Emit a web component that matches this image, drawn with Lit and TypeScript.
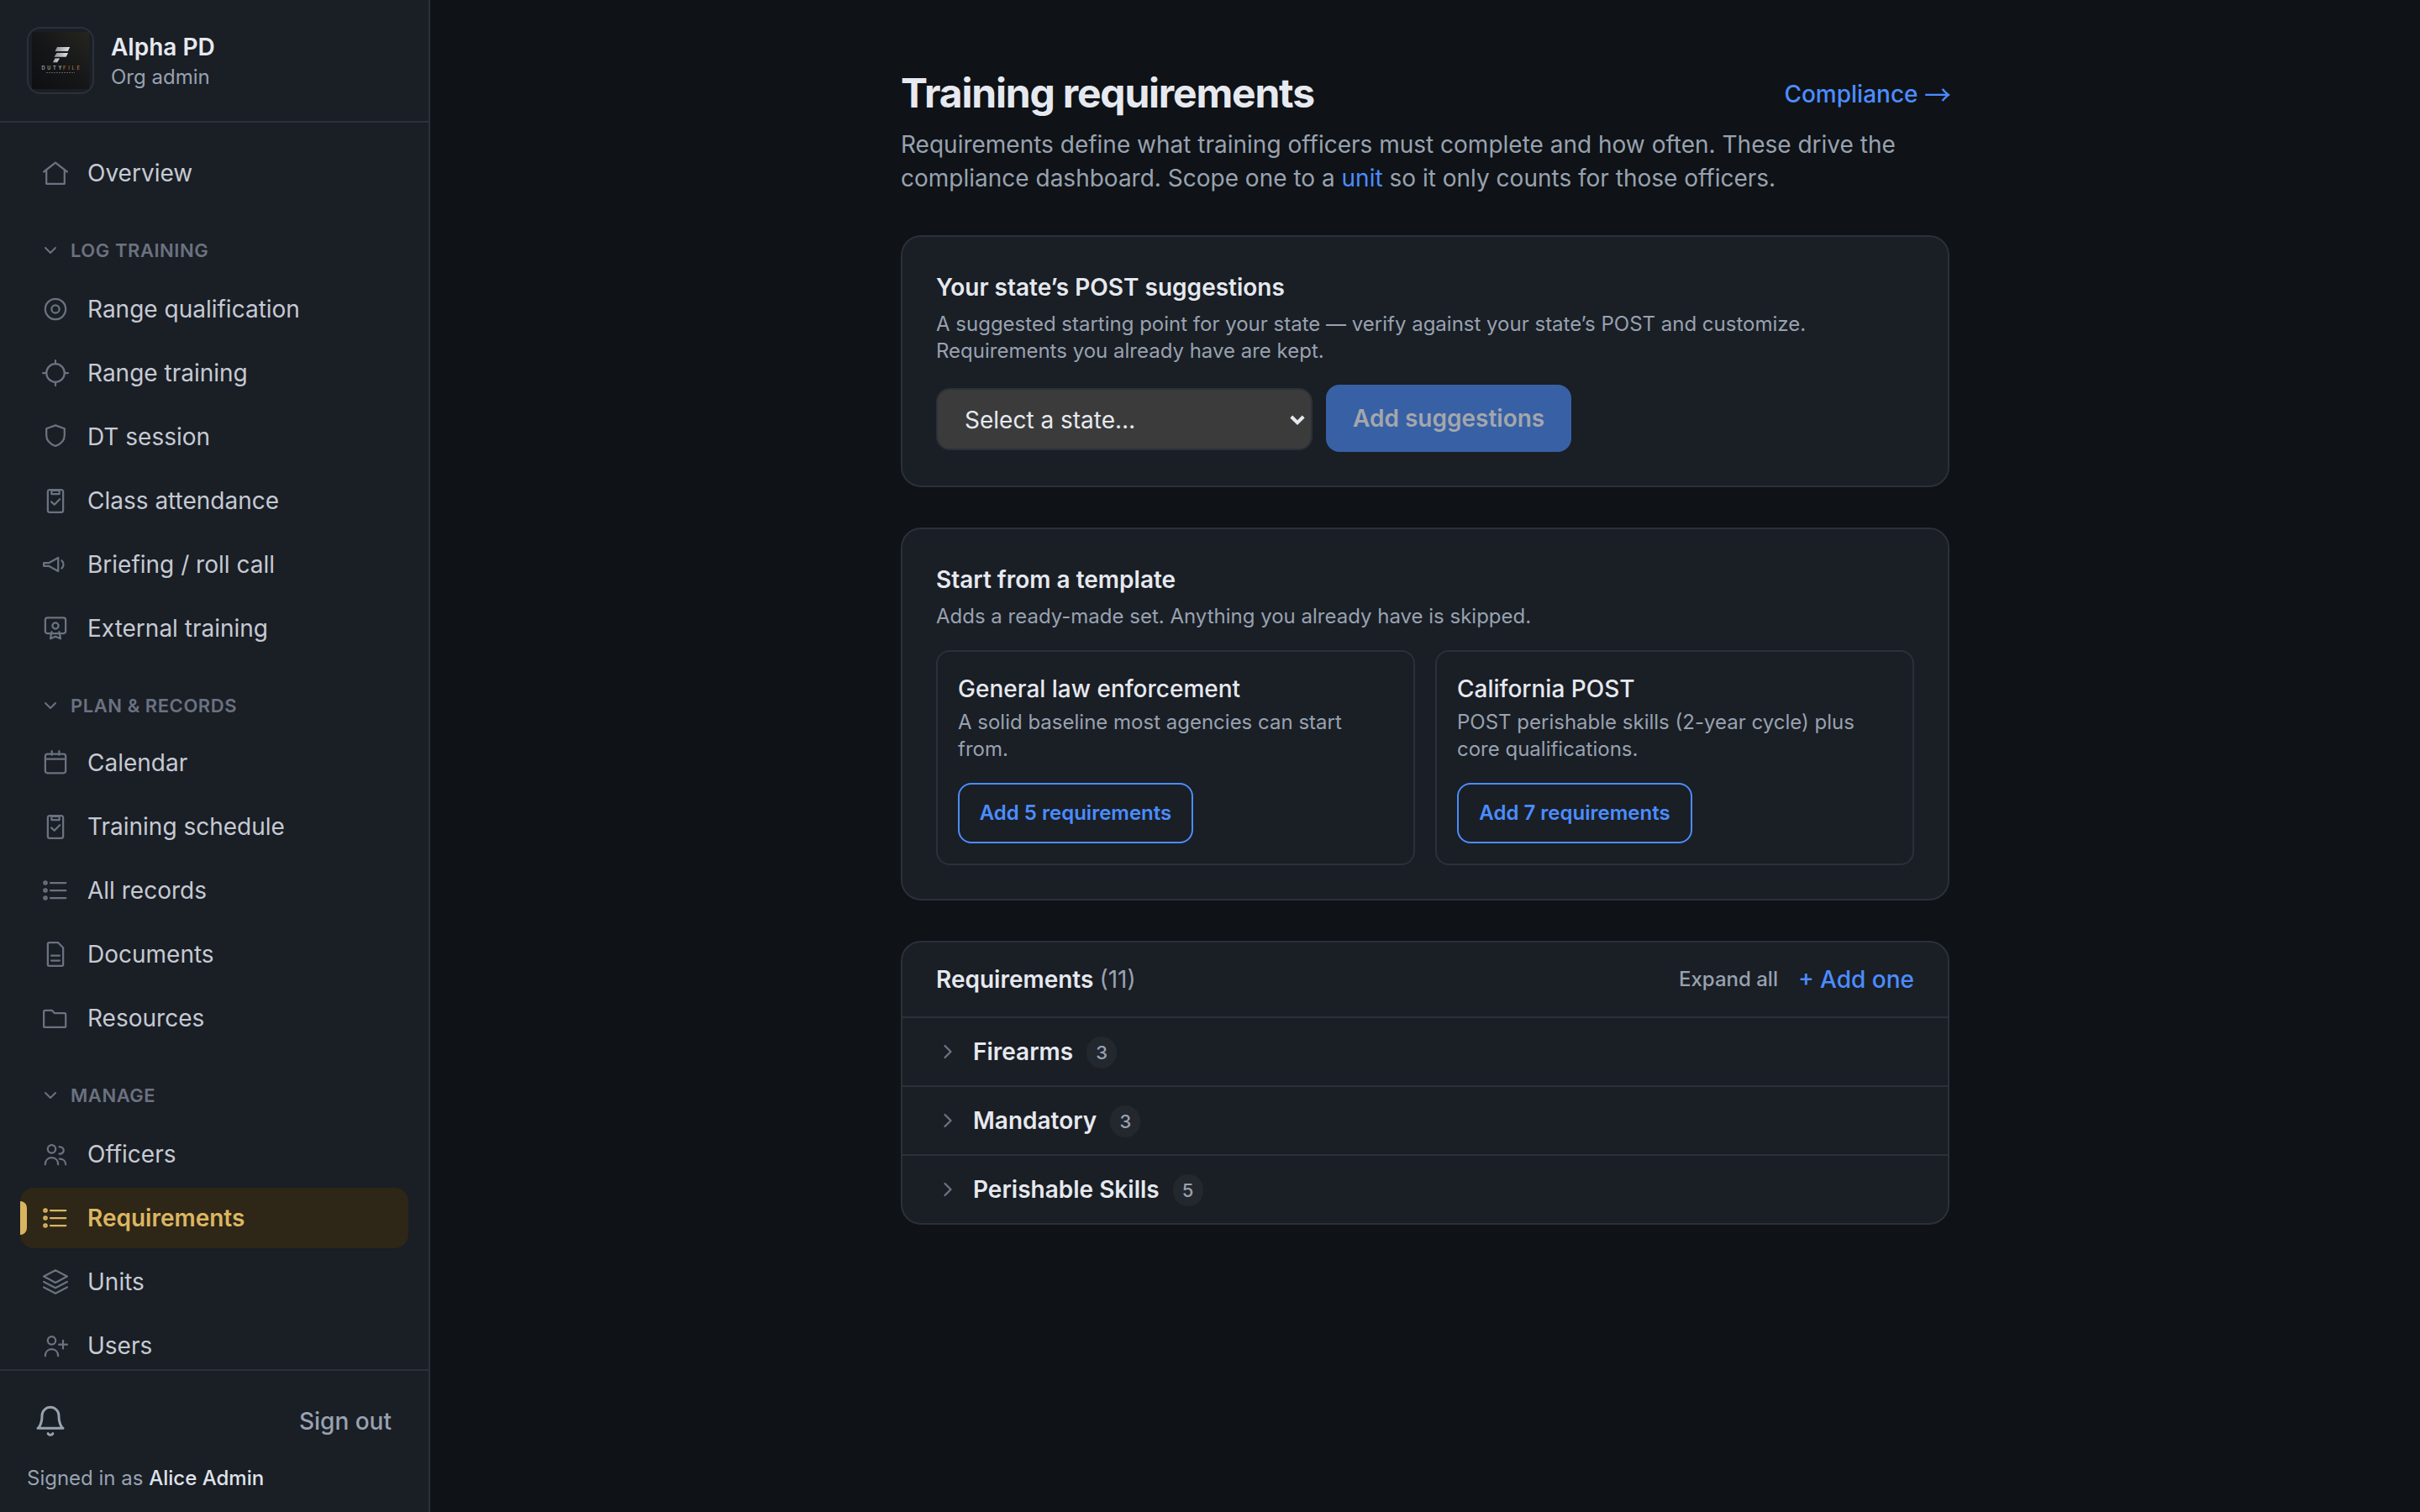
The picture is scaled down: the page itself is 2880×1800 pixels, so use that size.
import { LitElement, html, svg, css } from "lit";
import { customElement, property } from "lit/decorators.js";
import { classMap } from "lit/directives/class-map.js";

const icons: Record<string, unknown> = {
  home: svg`<path d="M2.75 11 12 3.75 21.25 11M4.8 9.6v10.9h14.4V9.6"/>`,
  target: svg`<circle cx="12" cy="12" r="8.1"/><circle cx="12" cy="12" r="3.1"/>`,
  crosshair: svg`<circle cx="12" cy="12" r="7.2"/><path d="M12 2v2.8M12 19.2V22M2 12h2.8M19.2 12H22"/>`,
  shield: svg`<path d="M12 2.9l7.2 2.6v5.4c0 4-2.9 6.9-7.2 8.4-4.3-1.5-7.2-4.4-7.2-8.4v-5.4z"/>`,
  clipboard: svg`<rect x="5.9" y="3.4" width="12.2" height="17.8" rx="1.6"/><path d="M8.9 3.9h6.2v2.9H8.9zM8.75 12.9l2.4 2.3 4.3-4.4"/>`,
  megaphone: svg`<path d="M2.75 10.8h3.9l7.5-4.2v10.8l-7.5-4.2h-3.9zM17 8.9a4.3 4.3 0 0 1 0 6.2"/>`,
  certificate: svg`<rect x="3.9" y="3.6" width="16.2" height="12.4" rx="1.8"/><circle cx="12" cy="10" r="2.4"/><path d="M9 14.8l-1 5.4 4-1.7 4 1.7-1-5.4"/>`,
  calendar: svg`<rect x="3.9" y="5" width="16.2" height="15.2" rx="1.8"/><path d="M3.9 9h16.2M9.1 2.75v3M14.9 2.75v3"/>`,
  list: svg`<circle cx="4" cy="6" r="1.1"/><circle cx="4" cy="12" r="1.1"/><circle cx="4" cy="18" r="1.1"/><path d="M8 6h12.2M8 12h12.2M8 18h12.2"/>`,
  document: svg`<path d="M5.9 3.9c0-.7.4-1.1 1.1-1.1h7.2l3.9 4v13.3c0 .7-.4 1.1-1.1 1.1H7c-.7 0-1.1-.4-1.1-1.1zM8.75 13.1h6.5M8.75 17h6.5"/>`,
  folder: svg`<path d="M2.75 6.9c0-.6.4-1 1-1h5.5l1.9 2.1h8c.6 0 1 .4 1 1v9.3c0 .6-.4 1-1 1H3.75c-.6 0-1-.4-1-1z"/>`,
  officers: svg`<circle cx="9" cy="7.9" r="3.15"/><path d="M3.9 20.2c0-3.2 2-5.4 5.1-5.4s5.1 2.2 5.1 5.4M15 6.2h.7a2.75 2.75 0 0 1 0 5.5H15M15.2 15.8c3 0 4.9 1.7 4.9 4.4"/>`,
  layers: svg`<path d="M12 2.8l9.25 4.9L12 12.6 2.75 7.7zM2.75 12 12 16.9 21.25 12M2.75 16.3 12 21.2l9.25-4.9"/>`,
  users: svg`<circle cx="9" cy="7.9" r="3.15"/><path d="M3.9 20.2c0-3.2 2-5.4 5.1-5.4s5.1 2.2 5.1 5.4M18 7.9v6.4M14.75 11.1h6.5"/>`,
  bell: svg`<path d="M6 8a6 6 0 0 1 12 0c0 7 3 9 3 9H3s3-2 3-9"/><path d="M10.3 20.8a1.94 1.94 0 0 0 3.4 0"/>`,
  down: svg`<path d="m6 9 6 6 6-6"/>`,
  right: svg`<path d="m9 18 6-6-6-6"/>`,
};

@customElement("ui-icon")
class UiIcon extends LitElement {
  @property() name = "home";
  static styles = css`
    :host { display: block; flex: none; }
    svg { display: block; width: 100%; height: 100%; fill: none; stroke: currentColor;
      stroke-width: var(--stroke, 1.5); stroke-linecap: round; stroke-linejoin: round; }
  `;
  render() {
    return html`<svg viewBox="0 0 24 24" aria-hidden="true">${icons[this.name]}</svg>`;
  }
}

interface Item { label: string; icon: string; active?: boolean }
const groups: { title?: string; items: Item[] }[] = [
  { items: [{ label: "Overview", icon: "home" }] },
  {
    title: "LOG TRAINING",
    items: [
      { label: "Range qualification", icon: "target" },
      { label: "Range training", icon: "crosshair" },
      { label: "DT session", icon: "shield" },
      { label: "Class attendance", icon: "clipboard" },
      { label: "Briefing / roll call", icon: "megaphone" },
      { label: "External training", icon: "certificate" },
    ],
  },
  {
    title: "PLAN & RECORDS",
    items: [
      { label: "Calendar", icon: "calendar" },
      { label: "Training schedule", icon: "clipboard" },
      { label: "All records", icon: "list" },
      { label: "Documents", icon: "document" },
      { label: "Resources", icon: "folder" },
    ],
  },
  {
    title: "MANAGE",
    items: [
      { label: "Officers", icon: "officers" },
      { label: "Requirements", icon: "list", active: true },
      { label: "Units", icon: "layers" },
      { label: "Users", icon: "users" },
    ],
  },
];

const base = css`
  * { box-sizing: border-box; margin: 0; }
  a { color: #4b8dff; text-decoration: none; }
  button { font: inherit; color: inherit; background: none; border: 0; padding: 0; }
`;

@customElement("side-bar")
class SideBar extends LitElement {
  static styles = [base, css`
    :host { display: flex; flex-direction: column; width: 512px; height: 1800px; flex: none;
      background: #1a1e25; border-right: 2px solid #2b303a; box-sizing: border-box; }
    .org { display: flex; align-items: flex-start; gap: 20px; padding: 32px; height: 146px; flex: none;
      border-bottom: 2px solid #2b303a; }
    .logo { width: 80px; height: 80px; border: 2px solid #2b303a; border-radius: 16px; padding: 4px; }
    .logo svg { display: block; width: 68px; height: 68px; }
    .who { padding-top: 4px; }
    .name { font-size: 28px; line-height: 40px; font-weight: 600; color: #e6e9ef; }
    .role { font-size: 24px; line-height: 32px; color: #98a2b0; }
    nav { flex: 1; min-height: 0; overflow: hidden; padding: 24px 24px 0; }
    .head { display: flex; align-items: center; gap: 12px; height: 48px; margin: 32px 0 10px; padding: 0 24px;
      color: #6b7280; font-size: 22px; font-weight: 600; letter-spacing: 0.025em; }
    .group:nth-child(3) .head { margin-bottom: 8px; }
    .head ui-icon { width: 24px; height: 24px; --stroke: 2; }
    .items { display: flex; flex-direction: column; gap: 4px; }
    .item { position: relative; display: flex; align-items: center; gap: 20px; height: 72px; padding: 0 24px;
      border-radius: 16px; font-size: 28px; line-height: 40px; color: #c5cad3; overflow: hidden; flex: none; }
    .item ui-icon { width: 36px; height: 36px; color: #6b7280; }
    .active { background: #2e2616; color: #dbb663; font-weight: 600; }
    .active ui-icon { color: #dbb663; }
    .active::before { content: ""; position: absolute; left: 0; top: 16px; width: 8px; height: 40px;
      border-radius: 0 8px 8px 0; background: #d9b45f; }
    footer { flex: none; height: 170px; border-top: 2px solid #2b303a; padding: 24px 32px; }
    .tools { display: flex; align-items: center; justify-content: space-between; height: 72px; padding: 0 12px 0 8px;
      color: #98a2b0; font-size: 28px; line-height: 40px; font-weight: 500; }
    .tools ui-icon { width: 40px; height: 40px; --stroke: 1.8; }
    .signed { margin-top: 16px; font-size: 24px; line-height: 32px; color: #98a2b0; }
    .signed b { font-weight: 500; color: #dfe3e9; }
  `];
  render() {
    return html`
      <div class="org">
        <div class="logo">
          <svg viewBox="0 0 68 68">
            <defs>
              <linearGradient id="bg" x1="0" y1="1" x2="1" y2="0">
                <stop offset="0" stop-color="#0e0f11" /><stop offset=".5" stop-color="#151618" /><stop offset="1" stop-color="#26251f" />
              </linearGradient>
              <linearGradient id="fg" x1="0" y1="0" x2="1" y2="0">
                <stop offset="0" stop-color="#8d8f93" /><stop offset="1" stop-color="#e2e3e5" />
              </linearGradient>
            </defs>
            <rect width="68" height="68" fill="url(#bg)" />
            <g fill="url(#fg)">
              <polygon points="30,18 45.2,18 42.8,23 27.5,23" />
              <polygon points="29.6,25 43,25 40.6,29.8 26.4,29.8" />
              <polygon points="27.4,31.4 33,31.4 30,36.2 24.8,36.2" />
            </g>
            <text x="11.5" y="45" font-family="Inter, sans-serif" font-size="5.6" font-weight="600" textLength="24" fill="#a3a5a8">DUTY</text>
            <text x="37" y="45" font-family="Inter, sans-serif" font-size="5.6" font-weight="600" textLength="20" fill="#a8713f">FILE</text>
            <path d="M17 48.5h34" stroke="#5c5c5c" stroke-width="1" stroke-dasharray="2 1" />
          </svg>
        </div>
        <div class="who"><div class="name">Alpha PD</div><div class="role">Org admin</div></div>
      </div>
      <nav>
        ${groups.map((g) => html`<div class="group">
          ${g.title ? html`<div class="head"><ui-icon name="down"></ui-icon><span>${g.title}</span></div>` : ""}
          <div class="items">
            ${g.items.map((i) => html`<a class=${classMap({ item: true, active: !!i.active })}><ui-icon name=${i.icon}></ui-icon><span>${i.label}</span></a>`)}
          </div>
        </div>`)}
      </nav>
      <footer>
        <div class="tools"><ui-icon name="bell"></ui-icon><span>Sign out</span></div>
        <div class="signed">Signed in as <b>Alice Admin</b></div>
      </footer>`;
  }
}

const templates = [
  { name: "General law enforcement", text: "A solid baseline most agencies can start from.", count: 5 },
  { name: "California POST", text: "POST perishable skills (2-year cycle) plus core qualifications.", count: 7 },
];
const categories = [
  { name: "Firearms", count: 3 },
  { name: "Mandatory", count: 3 },
  { name: "Perishable Skills", count: 5 },
];

@customElement("requirements-page")
class RequirementsPage extends LitElement {
  static styles = [base, css`
    :host { display: flex; flex-direction: column; gap: 48px; width: 1248px; margin: 0 auto; padding-top: 80px;
      font-size: 28px; line-height: 40px; color: #e6e9ef; }
    .top { display: flex; align-items: center; justify-content: space-between; height: 64px; }
    h1 { margin-top: -2px; font-size: 48px; line-height: 64px; font-weight: 700; letter-spacing: -0.025em; }
    h2 { font-size: 28px; line-height: 40px; font-weight: 600; }
    h2 span { font-weight: 400; color: #98a2b0; }
    .top a, .add { font-weight: 500; }
    .top a { height: 40px; }
    .arrow { font-family: "Noto Sans CJK JP", sans-serif; font-size: 32px; font-weight: 400; line-height: 1;
      letter-spacing: -2px; vertical-align: -3px; }
    .lead { margin-top: 8px; color: #98a2b0; }
    .card { background: #1a1e25; border: 2px solid #2b303a; border-radius: 24px; padding: 40px; }
    .sub { margin-top: 8px; font-size: 24px; line-height: 32px; color: #98a2b0; }
    .form { display: flex; align-items: center; gap: 16px; margin-top: 24px; height: 80px; }
    .select { display: flex; align-items: center; justify-content: space-between; width: 448px; height: 74px; margin-top: 2px;
      padding: 2px 4px 0 32px; background: #3b3b3b; border: 2px solid #2b303a; border-radius: 16px; }
    .select svg { width: 24px; height: 24px; fill: none; stroke: #e6e9ef; stroke-width: 4; }
    .primary { height: 80px; padding: 0 32px; border-radius: 16px; background: #3860a5; color: #a3a7ab; font-weight: 600; }
    .templates { display: grid; grid-template-columns: 1fr 1fr; gap: 24px; margin-top: 24px; }
    .template { border: 2px solid #2b303a; border-radius: 16px; padding: 24px; }
    h3 { font-size: 28px; line-height: 40px; font-weight: 500; }
    .template p { margin-top: 4px; font-size: 24px; line-height: 32px; color: #98a2b0; }
    .outline { display: block; margin-top: 24px; height: 72px; width: 280px; white-space: nowrap; border: 2px solid #4b8dff;
      border-radius: 16px; color: #4b8dff; font-size: 24px; font-weight: 600; }
    .list { padding: 0; overflow: hidden; }
    .bar { display: flex; align-items: center; justify-content: space-between; height: 88px; padding: 0 40px; }
    .actions { display: flex; align-items: center; gap: 24px; }
    .expand { font-size: 24px; font-weight: 500; color: #98a2b0; }
    .row { display: flex; align-items: center; height: 82px; padding: 0 40px; border-top: 2px solid #2b303a; font-weight: 600; gap: 16px; }
    .row ui-icon { width: 28px; height: 28px; color: #6b7280; --stroke: 2; }
    .badge { min-width: 36px; height: 38px; margin-top: 2px; border-radius: 19px; background: #23272e; color: #98a2b0;
      display: flex; align-items: center; justify-content: center; font-size: 22px; font-weight: 500; }
  `];
  render() {
    return html`
      <header>
        <div class="top"><h1>Training requirements</h1><a>Compliance <span class="arrow">→</span></a></div>
        <p class="lead">Requirements define what training officers must complete and how often. These drive the compliance dashboard. Scope one to a <a>unit</a> so it only counts for those officers.</p>
      </header>
      <section class="card">
        <h2>Your state’s POST suggestions</h2>
        <p class="sub">A suggested starting point for your state — verify against your state’s POST and customize.<br />Requirements you already have are kept.</p>
        <div class="form">
          <div class="select"><span>Select a state…</span><svg viewBox="0 0 24 24"><path d="M4.8 8l7.2 7.2L19.2 8" /></svg></div>
          <button class="primary">Add suggestions</button>
        </div>
      </section>
      <section class="card">
        <h2>Start from a template</h2>
        <p class="sub">Adds a ready-made set. Anything you already have is skipped.</p>
        <div class="templates">
          ${templates.map((t) => html`<article class="template">
            <h3>${t.name}</h3>
            <p>${t.text}</p>
            <button class="outline">Add ${t.count} requirements</button>
          </article>`)}
        </div>
      </section>
      <section class="card list">
        <div class="bar">
          <h2>Requirements <span>(11)</span></h2>
          <div class="actions"><button class="expand">Expand all</button><a class="add">+ Add one</a></div>
        </div>
        ${categories.map((c) => html`<div class="row"><ui-icon name="right"></ui-icon><span>${c.name}</span><span class="badge">${c.count}</span></div>`)}
      </section>`;
  }
}

@customElement("app-root")
class AppRoot extends LitElement {
  static styles = css`
    :host { display: flex; width: 2880px; height: 1800px; overflow: hidden; background: #0f1216;
      font-family: Inter, "Liberation Sans", sans-serif; }
    main { flex: 1; min-width: 0; }
  `;
  render() {
    return html`<side-bar></side-bar><main><requirements-page></requirements-page></main>`;
  }
}
